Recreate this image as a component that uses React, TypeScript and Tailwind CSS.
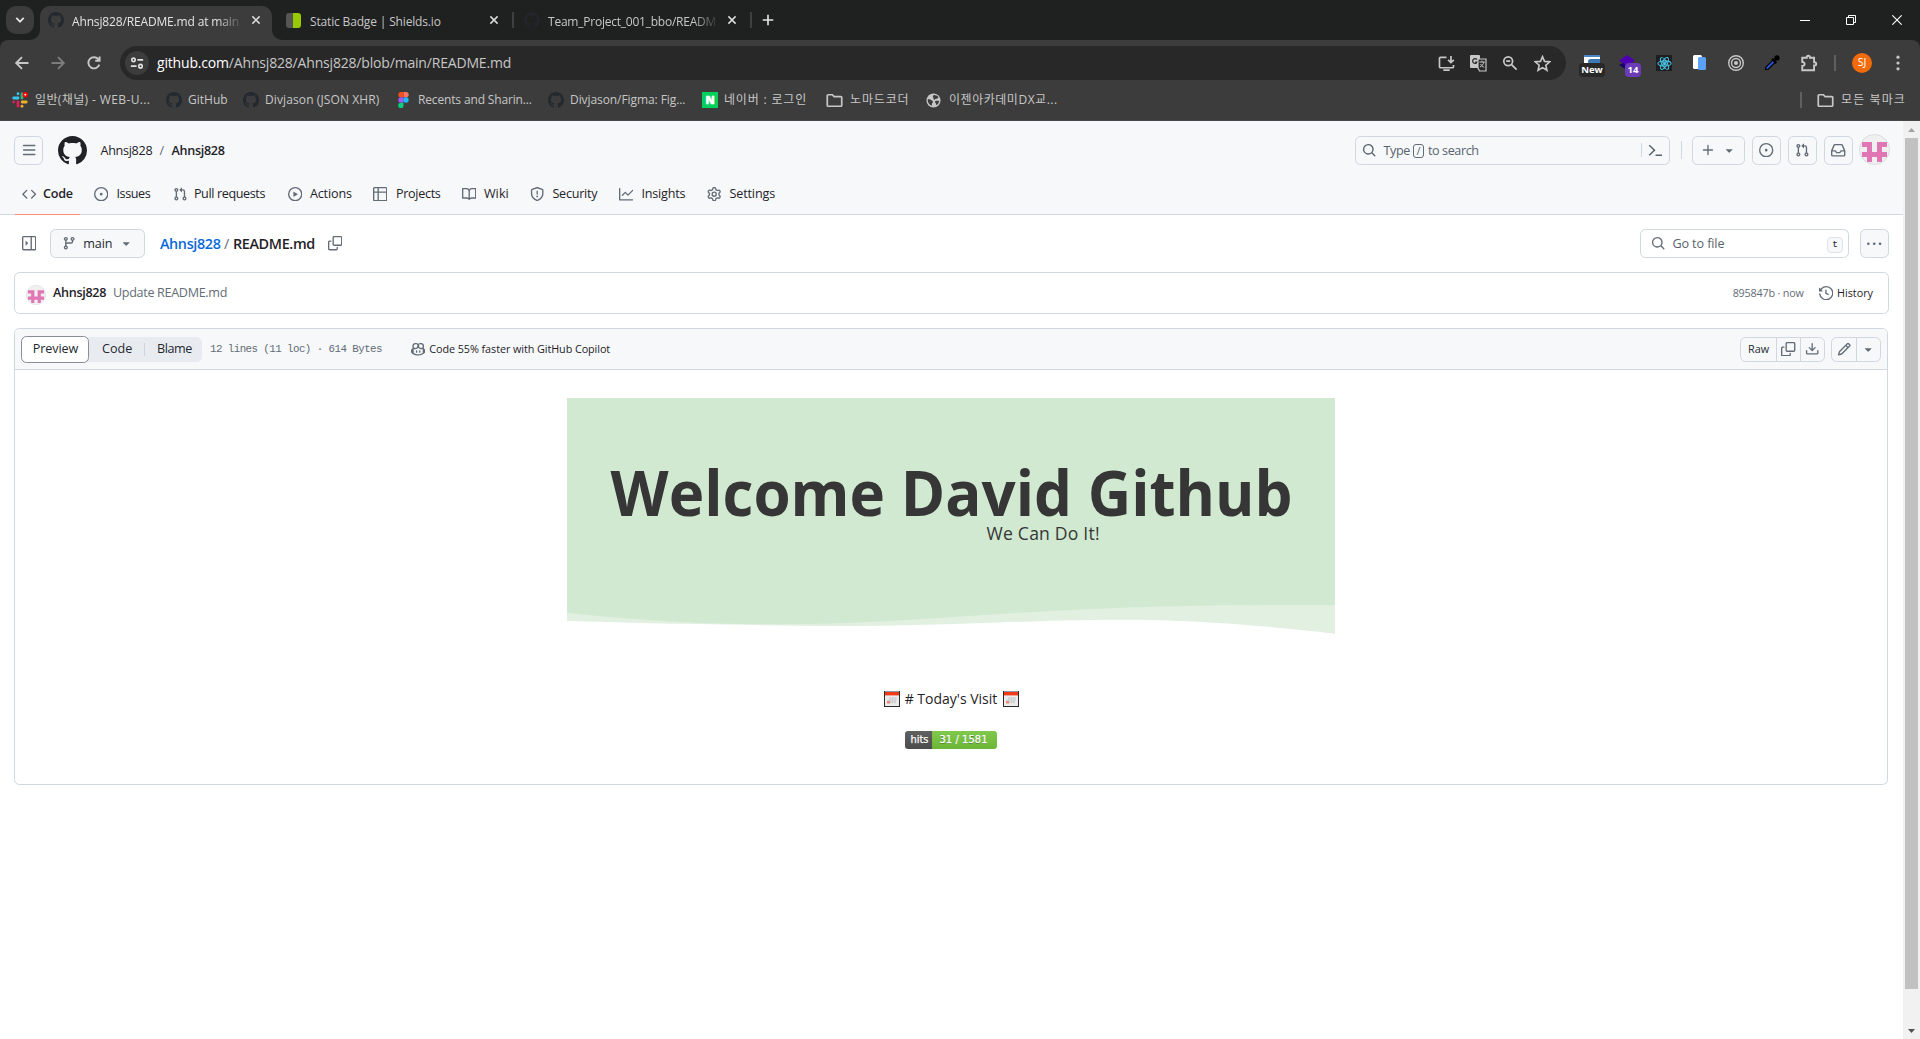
import type { ReactNode } from "react";

const P = {
  bars: "M1 2.75A.75.75 0 0 1 1.75 2h12.5a.75.75 0 0 1 0 1.5H1.75A.75.75 0 0 1 1 2.75Zm0 5A.75.75 0 0 1 1.75 7h12.5a.75.75 0 0 1 0 1.5H1.75A.75.75 0 0 1 1 7.75ZM1.75 12h12.5a.75.75 0 0 1 0 1.5H1.75a.75.75 0 0 1 0-1.5Z",
  github: "M8 0c4.42 0 8 3.58 8 8a8.013 8.013 0 0 1-5.45 7.59c-.4.08-.55-.17-.55-.38 0-.27.01-1.13.01-2.2 0-.75-.25-1.23-.54-1.48 1.78-.2 3.65-.88 3.65-3.95 0-.88-.31-1.59-.82-2.15.08-.2.36-1.02-.08-2.12 0 0-.67-.22-2.2.82-.64-.18-1.32-.27-2-.27-.68 0-1.36.09-2 .27-1.53-1.03-2.2-.82-2.2-.82-.44 1.1-.16 1.92-.08 2.12-.51.56-.82 1.28-.82 2.15 0 3.06 1.86 3.75 3.64 3.95-.23.2-.44.55-.51 1.07-.46.21-1.61.55-2.33-.66-.15-.24-.6-.83-1.23-.82-.67.01-.27.38.01.53.34.19.73.9.82 1.13.16.45.68 1.31 2.69.94 0 .67.01 1.3.01 1.49 0 .21-.15.45-.55.38A7.995 7.995 0 0 1 0 8c0-4.42 3.58-8 8-8Z",
  code: "m11.28 3.22 4.25 4.25a.75.75 0 0 1 0 1.06l-4.25 4.25a.749.749 0 0 1-1.275-.326.749.749 0 0 1 .215-.734L13.94 8l-3.72-3.72a.749.749 0 0 1 .326-1.275.749.749 0 0 1 .734.215Zm-6.56 0a.751.751 0 0 1 1.042.018.751.751 0 0 1 .018 1.042L2.06 8l3.72 3.72a.749.749 0 0 1-.326 1.275.749.749 0 0 1-.734-.215L.47 8.53a.75.75 0 0 1 0-1.06Z",
  issue: "M8 9.5a1.5 1.5 0 1 0 0-3 1.5 1.5 0 0 0 0 3Z M8 0a8 8 0 1 1 0 16A8 8 0 0 1 8 0ZM1.5 8a6.5 6.5 0 1 0 13 0 6.5 6.5 0 0 0-13 0Z",
  pull: "M1.5 3.25a2.25 2.25 0 1 1 3 2.122v5.256a2.251 2.251 0 1 1-1.5 0V5.372A2.25 2.25 0 0 1 1.5 3.25Zm5.677-.177L9.573.677A.25.25 0 0 1 10 .854V2.5h1A2.5 2.5 0 0 1 13.5 5v5.628a2.251 2.251 0 1 1-1.5 0V5a1 1 0 0 0-1-1h-1v1.646a.25.25 0 0 1-.427.177L7.177 3.427a.25.25 0 0 1 0-.354ZM3.75 2.5a.75.75 0 1 0 0 1.5.75.75 0 0 0 0-1.5Zm0 9.5a.75.75 0 1 0 0 1.5.75.75 0 0 0 0-1.5Zm8.25.75a.75.75 0 1 0 1.5 0 .75.75 0 0 0-1.5 0Z",
  play: "M8 0a8 8 0 1 1 0 16A8 8 0 0 1 8 0ZM1.5 8a6.5 6.5 0 1 0 13 0 6.5 6.5 0 0 0-13 0Zm4.879-2.773 4.264 2.559a.25.25 0 0 1 0 .428l-4.264 2.559A.25.25 0 0 1 6 10.559V5.442a.25.25 0 0 1 .379-.215Z",
  table: "M0 1.75C0 .784.784 0 1.75 0h12.5C15.216 0 16 .784 16 1.75v12.5A1.75 1.75 0 0 1 14.25 16H1.75A1.75 1.75 0 0 1 0 14.25ZM6.5 6.5v8h7.75a.25.25 0 0 0 .25-.25V6.5Zm8-1.5V1.75a.25.25 0 0 0-.25-.25H6.5V5Zm-13 1.5v7.75c0 .138.112.25.25.25H5v-8ZM5 5V1.5H1.75a.25.25 0 0 0-.25.25V5Z",
  book: "M0 1.75A.75.75 0 0 1 .75 1h4.253c1.227 0 2.317.59 3 1.501A3.743 3.743 0 0 1 11.006 1h4.245a.75.75 0 0 1 .75.75v10.5a.75.75 0 0 1-.75.75h-4.507a2.25 2.25 0 0 0-1.591.659l-.622.621a.75.75 0 0 1-1.06 0l-.622-.621A2.25 2.25 0 0 0 5.258 13H.75a.75.75 0 0 1-.75-.75Zm7.251 10.324.004-5.073-.002-2.253A2.25 2.25 0 0 0 5.003 2.5H1.5v9h3.757a3.75 3.75 0 0 1 1.994.574ZM8.755 4.75l-.004 7.322a3.752 3.752 0 0 1 1.992-.572H14.5v-9h-3.495a2.25 2.25 0 0 0-2.25 2.25Z",
  shield: "M7.467.133a1.748 1.748 0 0 1 1.066 0l5.25 1.68A1.75 1.75 0 0 1 15 3.48V7c0 1.566-.32 3.182-1.303 4.682-.983 1.498-2.585 2.813-5.032 3.855a1.697 1.697 0 0 1-1.33 0c-2.447-1.042-4.049-2.357-5.032-3.855C1.32 10.182 1 8.566 1 7V3.48a1.75 1.75 0 0 1 1.217-1.667Zm.61 1.429a.25.25 0 0 0-.153 0l-5.25 1.68a.25.25 0 0 0-.174.238V7c0 1.358.275 2.666 1.057 3.86.784 1.194 2.121 2.34 4.366 3.297a.196.196 0 0 0 .154 0c2.245-.956 3.582-2.104 4.366-3.298C13.225 9.666 13.5 8.36 13.5 7V3.48a.251.251 0 0 0-.174-.237l-5.25-1.68ZM8.75 4.75v3a.75.75 0 0 1-1.5 0v-3a.75.75 0 0 1 1.5 0ZM9 10.5a1 1 0 1 1-2 0 1 1 0 0 1 2 0Z",
  graph: "M1.5 1.75V13.5h13.75a.75.75 0 0 1 0 1.5H.75a.75.75 0 0 1-.75-.75V1.75a.75.75 0 0 1 1.5 0Zm14.28 2.53-5.25 5.25a.75.75 0 0 1-1.06 0L7 7.06 4.28 9.78a.751.751 0 0 1-1.042-.018.751.751 0 0 1-.018-1.042l3.25-3.25a.75.75 0 0 1 1.06 0L10 7.94l4.72-4.72a.751.751 0 0 1 1.042.018.751.751 0 0 1 .018 1.042Z",
  gear: "M8 0a8.2 8.2 0 0 1 .701.031C9.444.095 9.99.645 10.16 1.29l.288 1.107c.018.066.079.158.212.224.231.114.454.243.668.386.123.082.233.09.299.071l1.103-.303c.644-.176 1.392.021 1.82.63.27.385.506.792.704 1.218.315.675.111 1.422-.364 1.891l-.814.806c-.049.048-.098.147-.088.294.016.257.016.515 0 .772-.01.147.038.246.088.294l.814.806c.475.469.679 1.216.364 1.891a7.977 7.977 0 0 1-.704 1.217c-.428.61-1.176.807-1.82.63l-1.102-.302c-.067-.019-.177-.011-.3.071a5.909 5.909 0 0 1-.668.386c-.133.066-.194.158-.211.224l-.29 1.106c-.168.646-.715 1.196-1.458 1.26a8.006 8.006 0 0 1-1.402 0c-.743-.064-1.289-.614-1.458-1.26l-.289-1.106c-.018-.066-.079-.158-.212-.224a5.738 5.738 0 0 1-.668-.386c-.123-.082-.233-.09-.299-.071l-1.103.303c-.644.176-1.392-.021-1.82-.63a8.12 8.12 0 0 1-.704-1.218c-.315-.675-.111-1.422.363-1.891l.815-.806c.05-.048.098-.147.088-.294a6.214 6.214 0 0 1 0-.772c.01-.147-.038-.246-.088-.294l-.815-.806C.635 6.045.431 5.298.746 4.623a7.92 7.92 0 0 1 .704-1.217c.428-.61 1.176-.807 1.82-.63l1.102.302c.067.019.177.011.3-.071.214-.143.437-.272.668-.386.133-.066.194-.158.211-.224l.29-1.106C6.009.645 6.556.095 7.299.03 7.53.01 7.764 0 8 0Zm-.571 1.525c-.036.003-.108.036-.137.146l-.289 1.105c-.147.561-.549.967-.998 1.189-.173.086-.34.183-.5.29-.417.278-.97.423-1.529.27l-1.103-.303c-.109-.03-.175.016-.195.045-.22.312-.412.644-.573.99-.014.031-.021.11.059.19l.815.806c.411.406.562.957.53 1.456a4.709 4.709 0 0 0 0 .582c.032.499-.119 1.05-.53 1.456l-.815.806c-.081.08-.073.159-.059.19.162.346.353.677.573.989.02.03.085.076.195.046l1.102-.303c.56-.153 1.113-.008 1.53.27.161.107.328.204.501.29.447.222.85.629.997 1.189l.289 1.105c.029.109.101.143.137.146a6.6 6.6 0 0 0 1.142 0c.036-.003.108-.036.137-.146l.289-1.105c.147-.561.549-.967.998-1.189.173-.086.34-.183.5-.29.417-.278.97-.423 1.529-.27l1.103.303c.109.029.175-.016.195-.045.22-.313.411-.644.573-.99.014-.031.021-.11-.059-.19l-.815-.806c-.411-.406-.562-.957-.53-1.456a4.709 4.709 0 0 0 0-.582c-.032-.499.119-1.05.53-1.456l.815-.806c.081-.08.073-.159.059-.19a6.464 6.464 0 0 0-.573-.989c-.02-.03-.085-.076-.195-.046l-1.102.303c-.56.153-1.113.008-1.53-.27a4.44 4.44 0 0 0-.501-.29c-.447-.222-.85-.629-.997-1.189l-.289-1.105c-.029-.11-.101-.143-.137-.146a6.6 6.6 0 0 0-1.142 0ZM11 8a3 3 0 1 1-6 0 3 3 0 0 1 6 0ZM9.5 8a1.5 1.5 0 1 0-3.001.001A1.5 1.5 0 0 0 9.5 8Z",
  search: "M10.68 11.74a6 6 0 0 1-7.922-8.982 6 6 0 0 1 8.982 7.922l3.04 3.04a.749.749 0 0 1-.326 1.275.749.749 0 0 1-.734-.215ZM11.5 7a4.499 4.499 0 1 0-8.997 0A4.499 4.499 0 0 0 11.5 7Z",
  branch: "M9.5 3.25a2.25 2.25 0 1 1 3 2.122V6A2.5 2.5 0 0 1 10 8.5H6a1 1 0 0 0-1 1v1.128a2.251 2.251 0 1 1-1.5 0V5.372a2.25 2.25 0 1 1 1.5 0v1.836A2.493 2.493 0 0 1 6 7h4a1 1 0 0 0 1-1v-.628A2.25 2.25 0 0 1 9.5 3.25Zm-6 0a.75.75 0 1 0 1.5 0 .75.75 0 0 0-1.5 0Zm8.25-.75a.75.75 0 1 0 0 1.5.75.75 0 0 0 0-1.5ZM4.25 12a.75.75 0 1 0 0 1.5.75.75 0 0 0 0-1.5Z",
  triangle: "m4.427 7.427 3.396 3.396a.25.25 0 0 0 .354 0l3.396-3.396A.25.25 0 0 0 11.396 7H4.604a.25.25 0 0 0-.177.427Z",
  copy: "M0 6.75C0 5.784.784 5 1.75 5h1.5a.75.75 0 0 1 0 1.5h-1.5a.25.25 0 0 0-.25.25v7.5c0 .138.112.25.25.25h7.5a.25.25 0 0 0 .25-.25v-1.5a.75.75 0 0 1 1.5 0v1.5A1.75 1.75 0 0 1 9.25 16h-7.5A1.75 1.75 0 0 1 0 14.25Z M5 1.75C5 .784 5.784 0 6.75 0h7.5C15.216 0 16 .784 16 1.75v7.5A1.75 1.75 0 0 1 14.25 11h-7.5A1.75 1.75 0 0 1 5 9.25Zm1.75-.25a.25.25 0 0 0-.25.25v7.5c0 .138.112.25.25.25h7.5a.25.25 0 0 0 .25-.25v-7.5a.25.25 0 0 0-.25-.25Z",
  sidebar: "M6.823 7.823a.25.25 0 0 1 0 .354l-2.396 2.396A.25.25 0 0 1 4 10.396V5.604a.25.25 0 0 1 .427-.177Z M1.75 0h12.5C15.216 0 16 .784 16 1.75v12.5A1.75 1.75 0 0 1 14.25 16H1.75A1.75 1.75 0 0 1 0 14.25V1.75C0 .784.784 0 1.75 0ZM1.5 1.75v12.5c0 .138.112.25.25.25H9.5v-13H1.75a.25.25 0 0 0-.25.25ZM11 14.5h3.25a.25.25 0 0 0 .25-.25V1.75a.25.25 0 0 0-.25-.25H11Z",
  plus: "M7.75 2a.75.75 0 0 1 .75.75V7h4.25a.75.75 0 0 1 0 1.5H8.5v4.25a.75.75 0 0 1-1.5 0V8.5H2.75a.75.75 0 0 1 0-1.5H7V2.75A.75.75 0 0 1 7.75 2Z",
  inbox: "M2.8 2.06A1.75 1.75 0 0 1 4.41 1h7.18c.7 0 1.333.417 1.61 1.06l2.74 6.395c.04.093.06.194.06.295v4.5A1.75 1.75 0 0 1 14.25 15H1.75A1.75 1.75 0 0 1 0 13.25v-4.5c0-.101.02-.202.06-.295Zm1.61.44a.25.25 0 0 0-.23.152L1.887 8H4.75a.75.75 0 0 1 .6.3L6.625 10h2.75l1.275-1.7a.75.75 0 0 1 .6-.3h2.863L11.82 2.652a.25.25 0 0 0-.23-.152Zm10.09 7h-2.875l-1.275 1.7a.75.75 0 0 1-.6.3h-3.5a.75.75 0 0 1-.6-.3L4.375 9.5H1.5v3.75c0 .138.112.25.25.25h12.5a.25.25 0 0 0 .25-.25Z",
  kebab: "M8 9a1.5 1.5 0 1 0 0-3 1.5 1.5 0 0 0 0 3ZM1.5 9a1.5 1.5 0 1 0 0-3 1.5 1.5 0 0 0 0 3Zm13 0a1.5 1.5 0 1 0 0-3 1.5 1.5 0 0 0 0 3Z",
  history: "m.427 1.927 1.215 1.215a8.002 8.002 0 1 1-1.6 5.685.75.75 0 1 1 1.493-.154 6.5 6.5 0 1 0 1.18-4.458l1.358 1.358A.25.25 0 0 1 3.896 6H.25A.25.25 0 0 1 0 5.75V2.104a.25.25 0 0 1 .427-.177ZM7.75 4a.75.75 0 0 1 .75.75v2.992l2.028.812a.75.75 0 0 1-.557 1.392l-2.5-1A.751.751 0 0 1 7 8.25v-3.5A.75.75 0 0 1 7.75 4Z",
  download: "M2.75 14A1.75 1.75 0 0 1 1 12.25v-2.5a.75.75 0 0 1 1.5 0v2.5c0 .138.112.25.25.25h10.5a.25.25 0 0 0 .25-.25v-2.5a.75.75 0 0 1 1.5 0v2.5A1.75 1.75 0 0 1 13.25 14Z M7.25 7.689V2a.75.75 0 0 1 1.5 0v5.689l1.97-1.969a.749.749 0 1 1 1.06 1.06l-3.25 3.25a.749.749 0 0 1-1.06 0L4.22 6.78a.749.749 0 1 1 1.06-1.06l1.97 1.969Z",
  pencil: "M11.013 1.427a1.75 1.75 0 0 1 2.474 0l1.086 1.086a1.75 1.75 0 0 1 0 2.474l-8.61 8.61c-.21.21-.47.364-.756.445l-3.251.93a.75.75 0 0 1-.927-.928l.929-3.25c.081-.286.235-.547.445-.758l8.61-8.61Zm.176 4.823L9.75 4.81l-6.286 6.287a.253.253 0 0 0-.064.108l-.558 1.953 1.953-.558a.253.253 0 0 0 .108-.064Zm1.238-3.763a.25.25 0 0 0-.354 0L10.811 3.75l1.439 1.44 1.263-1.263a.25.25 0 0 0 0-.354Z",
  copilot: "M7.998 15.035c-4.562 0-7.873-2.914-7.998-3.749V9.338c.085-.628.677-1.686 1.588-2.065.013-.07.024-.143.036-.218.029-.183.06-.384.126-.612-.201-.508-.254-1.084-.254-1.656 0-.87.128-1.769.693-2.484.579-.733 1.494-1.124 2.724-1.261 1.206-.134 2.262.034 2.944.765.05.053.096.108.139.165.044-.057.094-.112.143-.165.682-.731 1.738-.899 2.944-.765 1.23.137 2.145.528 2.724 1.261.566.715.693 1.614.693 2.484 0 .572-.053 1.148-.254 1.656.066.228.098.429.126.612.012.076.024.148.037.218.924.385 1.522 1.471 1.591 2.095v1.872c0 .766-3.351 3.795-8.002 3.795Zm0-1.485c2.28 0 4.584-1.11 5.002-1.433V7.862l-.023-.116c-.49.21-1.075.291-1.727.291-1.146 0-2.059-.327-2.71-.991A3.222 3.222 0 0 1 8 6.303a3.24 3.24 0 0 1-.544.743c-.65.664-1.563.991-2.71.991-.652 0-1.236-.081-1.727-.291l-.023.116v4.255c.419.323 2.722 1.433 5.002 1.433ZM6.762 2.83c-.193-.206-.637-.413-1.682-.297-1.019.113-1.479.404-1.713.7-.247.312-.369.789-.369 1.554 0 .793.129 1.171.308 1.371.162.181.519.379 1.442.379.853 0 1.339-.235 1.638-.54.315-.322.527-.827.617-1.553.117-.935-.037-1.395-.241-1.614Zm4.155-.297c-1.044-.116-1.488.091-1.681.297-.204.219-.359.679-.242 1.614.091.726.303 1.231.618 1.553.299.305.784.54 1.638.54.922 0 1.28-.198 1.442-.379.179-.2.308-.578.308-1.371 0-.765-.123-1.242-.37-1.554-.233-.296-.693-.587-1.713-.7Z M6.25 9.037a.75.75 0 0 1 .75.75v1.501a.75.75 0 0 1-1.5 0V9.787a.75.75 0 0 1 .75-.75Zm4.25.75v1.501a.75.75 0 0 1-1.5 0V9.787a.75.75 0 0 1 1.5 0Z",
};

function Oct({ d, size = 14.4, className = "" }: { d: string; size?: number; className?: string }) {
  return (
    <svg viewBox="0 0 16 16" width={size} height={size} fill="currentColor" className={"block shrink-0 " + className}>
      <path fillRule={d === P.github ? "nonzero" : "evenodd"} d={d} />
    </svg>
  );
}

/* Stroked 16-unit icon used in the browser chrome. */
function Line({ children, size = 16, w = 1.7, className = "" }: { children: ReactNode; size?: number; w?: number; className?: string }) {
  return (
    <svg viewBox="0 0 16 16" width={size} height={size} fill="none" stroke="currentColor" strokeWidth={w} className={"block shrink-0 " + className}>
      {children}
    </svg>
  );
}

const GithubFav = () => <Oct d={P.github} size={16} className="text-[#24292f]" />;
const CloseX = () => (
  <Line size={10} w={2.4} className="text-[#dcdcdc]"><path d="M2.2 2.2l11.6 11.6M13.8 2.2L2.2 13.8" /></Line>
);
const Folder = () => (
  <Line size={17} w={1.6} className="text-[#c7c7c7]">
    <path d="M1.2 3.4a.8.8 0 0 1 .8-.8h4l1.6 1.7h6.4a.8.8 0 0 1 .8.8v7.5a.8.8 0 0 1-.8.8H2a.8.8 0 0 1-.8-.8z" />
  </Line>
);

function TabStrip() {
  return (
    <div className="flex h-10 w-full bg-[#1f2020] text-[12px] text-[#e3e3e3]">
      <div className="ml-1.5 mt-1.5 flex size-7 items-center justify-center rounded-[10px] bg-[#3c3c3c]">
        <Line size={12} w={2.4}><path d="M3 5.2l5 5 5-5" /></Line>
      </div>
      <div className="relative ml-1.5 mt-1.5 flex h-[34px] w-[232px] items-center rounded-t-[10px] bg-[#3c3c3c] pb-1.5">
        <svg className="absolute -left-2.5 bottom-0" width="10" height="10"><path d="M10 0v10H0A10 10 0 0 0 10 0z" fill="#3c3c3c" /></svg>
        <svg className="absolute -right-2.5 bottom-0" width="10" height="10"><path d="M0 0v10h10A10 10 0 0 1 0 0z" fill="#3c3c3c" /></svg>
        <div className="ml-2"><GithubFav /></div>
        <span className="ml-2 mt-1 w-[168px] overflow-hidden whitespace-nowrap tracking-[-0.15px] [mask-image:linear-gradient(to_right,black_86%,transparent_102%)]">Ahnsj828/README.md at main</span>
        <div className="ml-[11px]"><CloseX /></div>
      </div>
      <div className="ml-[14px] mt-1.5 flex h-7 w-[227px] items-center">
        <div className="flex h-[15px] w-[15px] overflow-hidden rounded-[3px]"><div className="w-[7px] bg-[#555]" /><div className="flex-1 bg-[#97ca00]" /></div>
        <span className="ml-[9px] mt-1 w-[179px] whitespace-nowrap tracking-[-0.16px] text-[#c7c7c7]">Static Badge | Shields.io</span>
        <CloseX />
      </div>
      <div className="mt-3 h-4 w-0.5 -ml-px bg-[#3f4040]" />
      <div className="ml-[10px] mt-1.5 flex h-7 items-center">
        <div className="opacity-70"><GithubFav /></div>
        <span className="ml-2 mt-1 w-[168px] overflow-hidden whitespace-nowrap tracking-[-0.23px] text-[#c7c7c7] [mask-image:linear-gradient(to_right,black_86%,transparent_102%)]">Team_Project_001_bbo/READM</span>
        <div className="ml-[11px]"><CloseX /></div>
      </div>
      <div className="ml-[13px] mt-3 h-4 w-0.5 bg-[#3f4040]" />
      <div className="ml-[10px] mt-[14px]"><Line size={12} w={2.2}><path d="M8 1v14M1 8h14" /></Line></div>
      <div className="ml-auto mr-[18px] flex h-10 items-center text-white">
        <svg width="10" height="10"><path d="M0 5.5h10" stroke="currentColor" /></svg>
        <svg width="10" height="10" className="ml-9" fill="none" stroke="currentColor"><path d="M.5 2.5h7v7h-7zM2.5 2.5v-2h7v7h-2" /></svg>
        <svg width="10" height="10" className="ml-9" fill="none" stroke="currentColor"><path d="M.3 .3l9.4 9.4M9.7 .3L.3 9.7" strokeWidth="1.1" /></svg>
      </div>
    </div>
  );
}

function Slot({ w, children }: { w: string; children: ReactNode }) {
  return <div className={"flex shrink-0 items-center justify-center " + w}>{children}</div>;
}

function Toolbar() {
  return (
    <div className="bg-[#1f2020]">
      <div className="flex h-[46px] w-full items-center rounded-t-[8px] bg-[#3c3c3c] text-[#c7c7c7]">
        <div className="ml-1 flex">
          <Slot w="w-9"><Line w={1.9}><path d="M14.5 8H2.5M8 2.2L2.2 8 8 13.8" /></Line></Slot>
          <Slot w="w-9"><Line w={1.9} className="text-[#7c7c7c]"><path d="M1.5 8h12M8 2.2L13.8 8 8 13.8" /></Line></Slot>
          <Slot w="w-9"><Line w={1.9}><path d="M13.3 9.6A5.6 5.6 0 1 1 12.6 4.6M13.6 1.4v4.4H9.2" /></Line></Slot>
        </div>
        <div className="ml-2 flex h-[34px] w-[1446px] items-center rounded-full bg-[#282828]">
          <div className="ml-[5px] flex size-6 items-center justify-center rounded-full bg-[#3c3c3c] text-[#e3e3e3]">
            <Line size={14} w={1.8}><circle cx="4" cy="4.4" r="2" /><path d="M8.5 4.4H15M1 11.6h6.5" /><circle cx="12" cy="11.6" r="2" /></Line>
          </div>
          <span className="-mt-px ml-2 whitespace-nowrap text-[14px] tracking-[-0.18px] text-[#c7c7c7]"><span className="text-white">github.com</span>/Ahnsj828/Ahnsj828/blob/main/README.md</span>
          <div className="ml-auto mr-2 flex">
            <Slot w="w-8"><Line size={17} w={1.6}><path d="M8 2.2H2.4a1 1 0 0 0-1 1V11a1 1 0 0 0 1 1h11.2a1 1 0 0 0 1-1V9.4M5 14.2h6M12.2 1v6M9.5 4.6l2.7 2.6 2.7-2.6" /></Line></Slot>
            <Slot w="w-8">
              <svg width="17" height="17" viewBox="0 0 17 17"><rect x="0" y="0" width="10" height="13" rx="1" fill="#c7c7c7" /><path d="M7 4.6A2.4 2.4 0 1 0 7.3 7H5" fill="none" stroke="#282828" strokeWidth="1.2" /><path d="M8 4h8v12H9.5L8 13z" fill="#282828" stroke="#c7c7c7" strokeWidth="1.2" /><path d="M9.5 7h5.3M12 5.6V7M13.9 7c-.5 2.4-2 4-4 5M10.6 9c.7 1.5 1.8 2.6 3.6 3.2" stroke="#c7c7c7" fill="none" /></svg>
            </Slot>
            <Slot w="w-8"><Line size={16} w={1.7}><circle cx="6.2" cy="6.2" r="4.4" /><path d="M9.6 9.6l5 5M4.2 6.2h4" /></Line></Slot>
            <Slot w="w-8"><Line size={17} w={1.5}><path d="M8 1.5l1.9 4.5 4.9.4-3.7 3.2 1.1 4.8L8 11.9l-4.2 2.5 1.1-4.8L1.2 6.4l4.9-.4z" /></Line></Slot>
          </div>
        </div>
        <div className="ml-[13px] flex items-center">
          <div className="relative h-4 w-[26px]">
            <div className="mx-auto h-4 w-4 overflow-hidden bg-white"><div className="h-[2px] bg-[#4a86c0]" /><div className="ml-1 mt-0.5 h-[5px] rounded-l-full bg-[#3b78b4]" /></div>
            <span className="absolute left-0 top-2 flex h-[14px] w-[26px] items-center justify-center rounded bg-[#282828] text-[9.5px] font-bold text-white">New</span>
          </div>
          <div className="relative ml-3.5 h-4 w-[23px]">
            <svg width="18" height="16" className="absolute left-0 top-0"><path d="M0 10l8-4 8 4-8 5z" fill="#1a0066" /><path d="M0 5.5L8 0l8 5.5L8 11z" fill="#4c00b0" /></svg>
            <span className="absolute left-[6px] top-2 flex h-[14px] w-4 items-center justify-center rounded bg-[#6b3bb8] text-[9.5px] font-bold text-white">14</span>
          </div>
          <div className="ml-[14px] flex size-4 items-center justify-center bg-[#1c1e1f]">
            <svg width="15" height="15" viewBox="-8 -8 16 16" fill="none" stroke="#4cc3e6" strokeWidth="1.1"><ellipse rx="7" ry="2.8" /><ellipse rx="7" ry="2.8" transform="rotate(60)" /><ellipse rx="7" ry="2.8" transform="rotate(120)" /><circle r="1.3" fill="#4cc3e6" /></svg>
          </div>
          <svg width="14" height="16" className="ml-[21px]"><rect width="9" height="14" rx="1.5" fill="#fff" /><rect x="5" y="2" width="8" height="13" rx="1.5" fill="#5aa2f8" /></svg>
          <svg width="16" height="16" className="ml-[21px]" viewBox="-8 -8 16 16" fill="none" stroke="#c7c7c7" strokeWidth="1.4"><circle r="7.3" /><circle r="4.5" /><circle r="2" fill="#c7c7c7" stroke="none" /></svg>
          <svg width="16" height="16" className="ml-5" viewBox="0 0 16 16"><path d="M1.5 14.5L2 12l7-7 2.2 2.2-7 7z" fill="#2f55e0" stroke="#000" strokeWidth="1.2" /><path d="M8 3.8l4.3 4.3M9.7 5.9l3.3-3.3" stroke="#000" strokeWidth="2.2" /><circle cx="13" cy="2.9" r="2.6" /></svg>
          <Line size={18} w={1.7} className="ml-5"><path d="M2 3.4h4v-.5a1.4 1.4 0 0 1 2.8 0v.5h3.7v4h.5a1.4 1.4 0 0 1 0 2.8h-.5v4.2H2v-3.7c2.8 0 2.8-3.6 0-3.6z" /></Line>
          <div className="ml-4 h-4 w-0.5 bg-[#5f6060]" />
          <div className="ml-4 flex size-5 items-center justify-center rounded-full bg-[#f26b0a] text-[10.5px] text-white">SJ</div>
          <svg width="4" height="16" className="ml-6" fill="#c7c7c7"><circle cx="2" cy="2.2" r="1.6" /><circle cx="2" cy="8" r="1.6" /><circle cx="2" cy="13.8" r="1.6" /></svg>
        </div>
      </div>
    </div>
  );
}

function Bookmarks() {
  const t = "whitespace-nowrap shrink-0 ";
  return (
    <div className="flex h-[35px] w-full items-center border-b border-[#47464a] bg-[#3c3c3c] pb-[6px] pl-3 text-[12px] text-[#c7c7c7]">
      <svg width="16" height="16" viewBox="0 0 16 16" fill="none" strokeWidth="2.8" strokeLinecap="round">
        <path d="M6 1.7v.1M1.7 6h4.4" stroke="#36c5f0" /><path d="M10 2v4" stroke="#2eb67d" /><path d="M14.2 10h-4" stroke="#ecb22e" /><path d="M6 10v4.2M1.7 10v.1" stroke="#e01e5a" /><path d="M10 14.2v.1" stroke="#ecb22e" /><circle cx="13.3" cy="2.7" r="2.7" fill="#f00" stroke="none" /><circle cx="13.3" cy="2.7" r=".9" fill="#fff" stroke="none" />
      </svg>
      <span className={t + "ml-[7px] w-[131px] tracking-[0.38px]"}>일반(채널) - WEB-U...</span>
      <GithubFav />
      <span className={t + "ml-[6px] w-[55px]"}>GitHub</span>
      <GithubFav />
      <span className={t + "ml-[6px] w-[133px] tracking-[0.11px]"}>Divjason (JSON XHR)</span>
      <svg width="11" height="16" viewBox="0 0 11 16"><path d="M3 0h2.5v5.3H3A2.65 2.65 0 0 1 3 0z" fill="#f24e1e" /><path d="M5.5 0H8a2.65 2.65 0 0 1 0 5.3H5.5z" fill="#ff7262" /><path d="M3 5.3h2.5v5.3H3a2.65 2.65 0 0 1 0-5.3z" fill="#a259ff" /><circle cx="8" cy="8" r="2.65" fill="#1abcfe" /><path d="M3 10.7h2.5v2.6A2.65 2.65 0 1 1 3 10.7z" fill="#0acf83" /></svg>
      <span className={t + "ml-[9px] w-[130px] tracking-[-0.15px]"}>Recents and Sharin...</span>
      <GithubFav />
      <span className={t + "ml-[6px] w-[132px] tracking-[-0.08px]"}>Divjason/Figma: Fig...</span>
      <div className="flex size-4 items-center justify-center bg-[#03cf5d] text-[11px] font-black text-white [-webkit-text-stroke:0.6px_white]">N</div>
      <span className={t + "ml-[6px] w-[102px] tracking-[0.82px]"}>네이버 : 로그인</span>
      <Folder />
      <span className={t + "ml-[7px] w-[76px] tracking-[0.86px]"}>노마드코더</span>
      <svg width="15" height="15" viewBox="0 0 16 16"><circle cx="8" cy="8" r="7.5" fill="#c7c7c7" /><path d="M2 6.5c2 .2 3 .6 4.3 1.6 1.6.8 1.300 2 .300 2.700-.4.800-.4 1.800-.4 2.900C3.500 12.800 1.400 10 2 6.500zM8.500 2.200c1.900 0 3.700.7 4.800 2.300-.4 1.400-1.600 1.500-2.900 1.600-.8.500-1 1.400-1.900 1-.9-.6-.2-1.500-.8-2.200-.7-.9-.3-2.300.8-2.700zM9.800 8.800c1.400-.9 2.800-.6 4.200-.3-.2 1.900-1.300 3.600-2.900 4.500-.3-1-.3-1.700-.9-2.300-.6-.600-.9-1.300-.4-1.900z" fill="#3c3c3c" /></svg>
      <span className={t + "ml-[8px] tracking-[0.53px]"}>이젠아카데미DX교...</span>
      <div className="ml-auto h-4 w-0.5 shrink-0 bg-[#5f6060]" />
      <div className="ml-[15px]"><Folder /></div>
      <span className={t + "ml-[7px] mr-[14px] tracking-[1.1px]"}>모든 북마크</span>
    </div>
  );
}

/* Identicon on a 5px cell grid inside a round frame. */
function Identicon({ className }: { className: string }) {
  return (
    <svg viewBox="0 0 31 31" className={"block shrink-0 " + className}>
      <circle cx="15.5" cy="15.5" r="15" fill="#f0f0f0" stroke="#dadde0" />
      <path d="M3 8h10v10h5V8h10v5h-5v5h5v5h-5v5h-5v-5h-5v5H8v-5H3v-5h5v-5H3z" fill="#e077b4" />
    </svg>
  );
}

const TABS: { d: string; label: string; w: string; ls: string; gap: string }[] = [
  { d: P.issue, label: "Issues", w: "w-[78.500px]", ls: "tracking-[-0.39px]", gap: "ml-[8px]" },
  { d: P.pull, label: "Pull requests", w: "w-[115.500px]", ls: "tracking-[-0.38px]", gap: "ml-[7px]" },
  { d: P.play, label: "Actions", w: "w-[85px]", ls: "tracking-[-0.14px]", gap: "ml-[7.500px]" },
  { d: P.table, label: "Projects", w: "w-[88.500px]", ls: "tracking-[-0.3px]", gap: "ml-[8.500px]" },
  { d: P.book, label: "Wiki", w: "w-[68.500px]", ls: "tracking-[0.1px]", gap: "ml-[8px]" },
  { d: P.shield, label: "Security", w: "w-[88.500px]", ls: "tracking-[-0.23px]", gap: "ml-[8px]" },
  { d: P.graph, label: "Insights", w: "w-[88px]", ls: "tracking-[-0.18px]", gap: "ml-[8.500px]" },
  { d: P.gear, label: "Settings", w: "w-[90px]", ls: "tracking-[-0.12px]", gap: "ml-[8.500px]" },
];

const box = "flex h-[29px] items-center rounded-[5.500px] border border-[#d0d7de] ";

function Header() {
  return (
    <header className="h-[94px] border-b border-[#d0d7de] bg-[#f6f8fa]">
      <div className="flex h-[58px] items-center">
        <div className={box + "ml-3.5 w-[29px] justify-center text-[#636c76]"}><Oct d={P.bars} className="ml-px" /></div>
        <Oct d={P.github} size={29} className="ml-[15px] text-[#1f2328]" />
        <span className="ml-[13.500px] mt-px w-[59px] tracking-[-0.3px]">Ahnsj828</span>
        <span className="mt-px w-[12px] text-[#636c76]">/</span>
        <span className="mt-px font-semibold tracking-[-0.3px]">Ahnsj828</span>
        <div className={box + "ml-auto w-[315px] text-[#59636e]"}>
          <Oct d={P.search} className="ml-[6px]" />
          <span className="ml-[7px] mt-px tracking-[-0.38px]">Type</span>
          <span className="ml-[3px] mt-px flex h-[14px] w-[11px] items-center justify-center rounded-[3px] border border-[#636c76] text-[11px]">/</span>
          <span className="ml-[4px] mt-px tracking-[-0.4px]">to search</span>
          <div className="ml-auto h-[14px] w-px bg-[#d0d7de]" />
          <svg width="15" height="13" className="ml-[6px] mr-[6px]" fill="none" stroke="currentColor" strokeWidth="1.5"><path d="M1.2 1.2L6.5 6.2 1.2 11.3M7.5 11.3H14" /></svg>
        </div>
        <div className="ml-[11px] h-[18px] w-px bg-[#d0d7de]" />
        <div className="ml-[10px] flex gap-[7px] text-[#636c76]">
          <div className={box + "w-[53px]"}><Oct d={P.plus} className="ml-[8px]" /><Oct d={P.triangle} className="ml-[7px]" /></div>
          <div className={box + "w-[29px] justify-center"}><Oct d={P.issue} /></div>
          <div className={box + "w-[29px] justify-center"}><Oct d={P.pull} /></div>
          <div className={box + "w-[29px] justify-center"}><Oct d={P.inbox} /></div>
        </div>
        <Identicon className="-mt-px ml-1.5 mr-[13px] size-[31px]" />
      </div>
      <nav className="flex h-[35px] items-center pb-[5px] pl-[22px]">
        <div className="relative flex h-full w-[72px] items-center">
          <Oct d={P.code} className="text-[#636c76]" />
          <span className="ml-[6.500px] font-semibold tracking-[-0.19px]">Code</span>
          <div className="absolute -bottom-[6px] -left-[7px] h-[1.500px] w-[65px] bg-[#fd8c73]" />
        </div>
        {TABS.map((t) => (
          <div key={t.label} className={"flex items-center whitespace-nowrap " + t.w}>
            <Oct d={t.d} className="text-[#636c76]" />
            <span className={t.gap + " " + t.ls}>{t.label}</span>
          </div>
        ))}
      </nav>
    </header>
  );
}

function PathRow() {
  return (
    <div className="mt-[14px] flex h-[29px] items-center text-[#636c76]">
      <Oct d={P.sidebar} className="ml-[22px]" />
      <div className={box + "ml-[13.500px] w-[95px] bg-[#f6f8fa]"}>
        <Oct d={P.branch} className="ml-[11px]" />
        <span className="ml-[7px] mt-px w-[28px] font-medium tracking-[-0.14px] text-[#24292f]">main</span>
        <Oct d={P.triangle} className="ml-[8px]" />
      </div>
      <span className="ml-[15px] w-[64px] text-[14.400px] font-semibold tracking-[-0.35px] text-[#0969da]">Ahnsj828</span>
      <span className="w-[9px] text-[14.400px]">/</span>
      <span className="w-[95px] text-[14.400px] font-semibold tracking-[-0.36px] text-[#1f2328]">README.md</span>
      <Oct d={P.copy} />
      <div className={box + "ml-auto w-[209px] bg-white"}>
        <Oct d={P.search} className="ml-[10px]" />
        <span className="ml-[7px] mt-px tracking-[-0.1px] text-[#59636e]">Go to file</span>
        <span className="ml-auto mr-[5px] mt-0.5 flex h-4 w-4 items-center justify-center rounded-[4px] border border-[#dfe3e7] bg-[#f6f8fa] pt-px font-['Liberation_Mono',monospace] text-[9.500px] text-[#1f2328]">t</span>
      </div>
      <div className={box + "ml-[11px] mr-[14px] w-[29px] justify-center bg-[#f6f8fa]"}><Oct d={P.kebab} className="mt-px" /></div>
    </div>
  );
}

function CommitRow() {
  return (
    <div className="ml-[14px] mt-[14px] flex h-[42px] w-[1875px] items-center rounded-[5.500px] border border-[#d0d7de] text-[#636c76]">
      <Identicon className="ml-[11px] mt-[3px] size-5" />
      <span className="ml-[7px] w-[60px] font-semibold tracking-[-0.3px] text-[#1f2328]">Ahnsj828</span>
      <span className="tracking-[-0.33px]">Update README.md</span>
      <span className="ml-auto text-[10.800px] tracking-[-0.2px]">895847b · now</span>
      <Oct d={P.history} className="ml-[15px]" />
      <span className="ml-[4px] mr-[15px] text-[10.800px] font-medium text-[#1f2328]">History</span>
    </div>
  );
}

function FileHeader() {
  return (
    <div className="flex h-[41px] items-center border-b border-[#d0d7de] bg-[#f6f8fa] text-[#636c76]">
      <div className="ml-[6px] flex h-[25px] w-[181px] items-center rounded-[5.500px] bg-[#e8ecf1] text-[#24292f]">
        <div className="flex h-[27px] w-[68px] shrink-0 items-center justify-center rounded-[5.500px] border border-[#868e97] bg-white pl-px font-medium tracking-[-0.12px]">Preview</div>
        <span className="ml-[13px] w-[42px] shrink-0">Code</span>
        <div className="h-[13px] w-px shrink-0 bg-[#cdd4db]" />
        <span className="ml-[12px] tracking-[-0.41px]">Blame</span>
      </div>
      <span className="ml-[8px] whitespace-pre font-['Liberation_Mono',monospace] text-[10.800px] tracking-[-0.55px]">12 lines (11 loc) · 614 Bytes</span>
      <Oct d={P.copilot} className="ml-[29px]" />
      <span className="ml-[4px] text-[10.800px] font-medium tracking-[-0.07px] text-[#1f2328]">Code 55% faster with GitHub Copilot</span>
      <div className="ml-auto flex h-[25px] w-[85px] rounded-[5.500px] border border-[#d0d7de]">
        <span className="flex w-[36px] items-center justify-center border-r border-[#d0d7de] text-[10.800px] font-medium text-[#24292f]">Raw</span>
        <span className="flex w-[24px] items-center justify-center border-r border-[#d0d7de]"><Oct d={P.copy} /></span>
        <span className="flex flex-1 items-center justify-center"><Oct d={P.download} /></span>
      </div>
      <div className="ml-[6px] mr-[6px] flex h-[25px] w-[50px] rounded-[5.500px] border border-[#d0d7de]">
        <span className="flex w-[25px] items-center justify-center border-r border-[#d0d7de]"><Oct d={P.pencil} /></span>
        <span className="flex flex-1 items-center justify-center"><Oct d={P.triangle} /></span>
      </div>
    </div>
  );
}

function Calendar() {
  return (
    <svg width="16" height="16" viewBox="0 0 16 16" className="block shrink-0">
      <rect x=".5" y=".5" width="15" height="15" fill="#ececec" stroke="#2a2a2a" />
      <path d="M1 1h14v3.400H1z" fill="#f03a17" />
      <path d="M1 0h14v1H1z" fill="#8b9aa6" />
      <path d="M5 7h8M3 9h10M3 11h9M6 6.500v6M8.500 6.500v6M11 6.500v6" stroke="#c3c6ca" strokeWidth=".8" />
      <path d="M3 10h3v2.500H3z" fill="#f2866f" />
    </svg>
  );
}

function Banner() {
  return (
    <svg width="768" height="237" viewBox="0 0 768 237" className="mt-[28px] block shrink-0" fontFamily="'Open Sans', 'Noto Sans', sans-serif">
      <path d="M0 0H768V235.700C600 216 520 222 430 224.500C340 228 270 229 180 226.800Q80 225.500 0 222.700Z" fill="#e2f0e2" />
      <path d="M0 0H768V207C560 206.500 480 213 340 222C230 229 120 228 0 214.700Z" fill="#d1e9d1" />
      <text x="43.600" y="118" fontSize="62" fontWeight="700" fill="#363636" textLength="682" lengthAdjust="spacingAndGlyphs">Welcome David Github</text>
      <text x="419.600" y="142" fontSize="17.600" fill="#363636" textLength="113">We Can Do It!</text>
    </svg>
  );
}

function HitsBadge() {
  return (
    <div className="mt-[23px] flex h-[18px] w-[92px] overflow-hidden rounded-[3px] font-['DejaVu_Sans',sans-serif] text-[9.900px] text-white [-webkit-text-stroke:0.25px_white] [text-shadow:0_1px_0_rgba(1,1,1,0.4)]">
      <div className="flex w-[27px] items-center justify-center bg-gradient-to-b from-[#606060] to-[#4c4c4c] pl-0.5">hits</div>
      <div className="flex flex-1 items-center justify-center bg-gradient-to-b from-[#80c94c] to-[#6cb637] pr-0.5 tracking-[0.1px]">31 / 1581</div>
    </div>
  );
}

function Scrollbar() {
  return (
    <div className="flex w-[17px] shrink-0 flex-col items-center bg-[#f1f1f1]">
      <svg width="17" height="17"><path d="M5 11l3.500-4 3.500 4z" fill="#a3a3a3" /></svg>
      <div className="h-[851px] w-[13px] bg-[#c1c1c1]" />
      <svg width="17" height="17" className="mt-auto"><path d="M5 7l3.500 4L12 7z" fill="#505050" /></svg>
    </div>
  );
}

export default function App() {
  return (
    <div className="flex h-[1039px] w-[1920px] flex-col overflow-hidden bg-white font-['Open_Sans','Noto_Sans_CJK_KR',sans-serif]">
      <TabStrip />
      <Toolbar />
      <Bookmarks />
      <div className="flex min-h-0 flex-1">
        <main className="flex-1 bg-white text-[12.600px] leading-[18px] text-[#1f2328]">
          <Header />
          <PathRow />
          <CommitRow />
          <section className="ml-[14px] mt-[14px] h-[457px] w-[1874px] overflow-hidden rounded-[5.500px] border border-[#d0d7de]">
            <FileHeader />
            <div className="flex flex-col items-center">
              <Banner />
              <div className="mt-[55px] flex h-[18px] items-center gap-[4.500px]">
                <Calendar />
                <span className="w-[94px] whitespace-nowrap text-center text-[14px] font-medium">{"# Today's Visit"}</span>
                <Calendar />
              </div>
              <HitsBadge />
            </div>
          </section>
        </main>
        <Scrollbar />
      </div>
    </div>
  );
}
